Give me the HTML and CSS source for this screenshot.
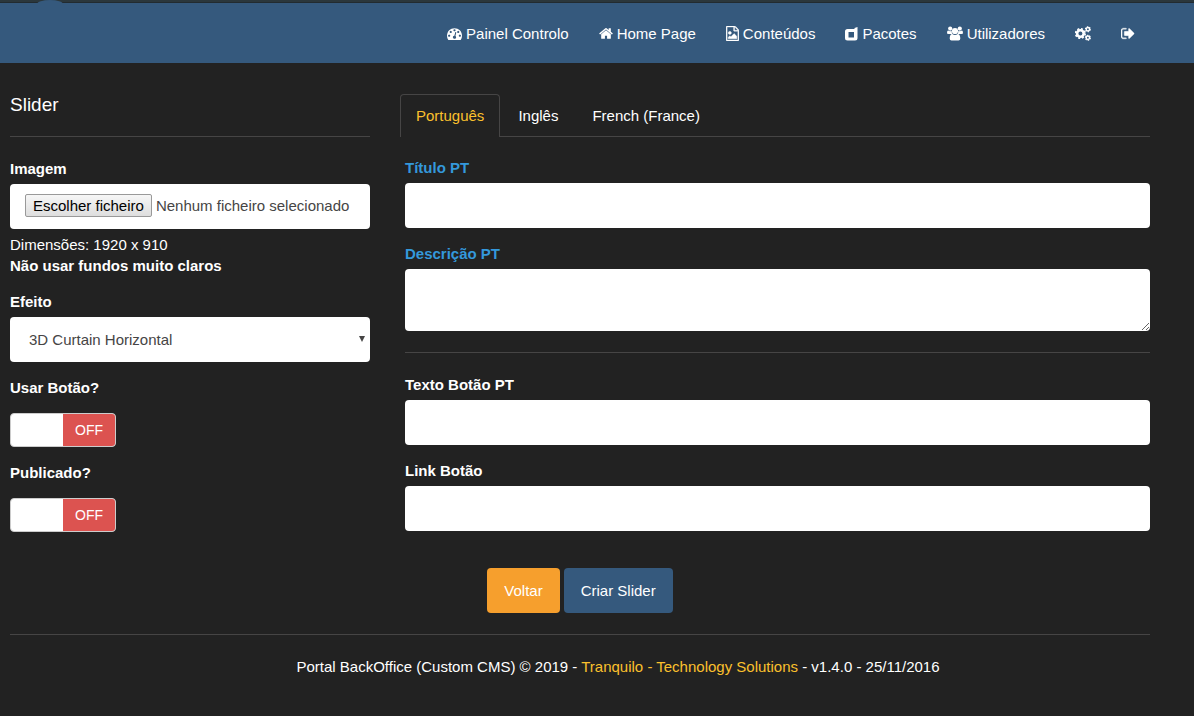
FILE: index.html
```html
<!DOCTYPE html>
<html lang="pt">
<head>
<meta charset="utf-8">
<title>Slider - BackOffice</title>
<link rel="stylesheet" href="styles.css">
</head>
<body>
<div class="topbar"></div>
<header class="navbar">
  <span class="navbar-bump"></span>
  <nav class="container">
    <ul class="menu">
      <li><a href="#"><svg width="15" height="15" viewBox="0 0 1792 1792" aria-hidden="true"><path d="M384 1152q0-53-37.5-90.5t-90.5-37.5-90.5 37.5-37.5 90.5 37.5 90.5 90.5 37.5 90.5-37.5 37.5-90.5zm192-448q0-53-37.5-90.5t-90.5-37.5-90.5 37.5-37.5 90.5 37.5 90.5 90.5 37.5 90.5-37.5 37.5-90.5zm428 481l101-382q6-26-7.5-48.5t-38.5-29.5-48 6.5-30 39.5l-101 382q-60 5-107 43.5t-63 98.5q-20 77 20 146t117 89 146-20 89-117q16-60-6-117t-72-91zm660-33q0-53-37.5-90.5t-90.5-37.5-90.5 37.5-37.5 90.5 37.5 90.5 90.5 37.5 90.5-37.5 37.5-90.5zm-640-640q0-53-37.5-90.5t-90.5-37.5-90.5 37.5-37.5 90.5 37.5 90.5 90.5 37.5 90.5-37.5 37.5-90.5zm448 192q0-53-37.5-90.5t-90.5-37.5-90.5 37.5-37.5 90.5 37.5 90.5 90.5 37.5 90.5-37.5 37.5-90.5zm320 448q0 261-141 483-19 29-54 29h-1402q-35 0-54-29-141-221-141-483 0-182 71-348t191-286 286-191 348-71 348 71 286 191 191 286 71 348z"/></svg>Painel Controlo</a></li>
      <li><a href="#"><svg width="14" height="15" viewBox="64 0 1664 1792" aria-hidden="true"><path d="M1472 992v480q0 26-19 45t-45 19h-384v-384h-256v384h-384q-26 0-45-19t-19-45v-480q0-1 .5-3t.5-3l575-474 575 474q1 2 1 6zm223-69l-62 74q-8 9-21 11h-3q-13 0-21-7l-692-577-692 577q-12 8-24 7-13-2-21-11l-62-74q-8-10-7-23.500t11-21.500l719-599q32-26 76-26t76 26l244 204v-195q0-14 9-23t23-9h192q14 0 23 9t9 23v408l219 182q10 8 11 21.500t-7 23.500z"/></svg>Home Page</a></li>
      <li><a href="#"><svg class="bold" width="13" height="15" viewBox="128 0 1536 1792" aria-hidden="true"><path d="M1596 380q28 28 48 76t20 88v1152q0 40-28 68t-68 28h-1344q-40 0-68-28t-28-68v-1600q0-40 28-68t68-28h896q40 0 88 20t76 48zm-444-244v376h376q-10-29-22-41l-313-313q-12-12-41-22zm384 1528v-1024h-416q-40 0-68-28t-28-68v-416h-768v1536h1280zm-128-448v320h-1024v-192l192-192 128 128 384-384zm-832-192q-80 0-136-56t-56-136 56-136 136-56 136 56 56 136-56 136-136 56z"/></svg>Conteúdos</a></li>
      <li><a href="#"><svg width="13" height="15" viewBox="0 0 13 15" aria-hidden="true"><path fill-rule="evenodd" d="M2.500 3H9.500V2L12.500 1V12Q12.500 14.500 10 14.500H2.500Q0 14.500 0 12V5.500Q0 3 2.500 3ZM3.500 6V11.500H9V6Z"/></svg>Pacotes</a></li>
      <li><a href="#"><svg width="16" height="15" viewBox="0 0 16 15" aria-hidden="true"><circle cx="3.200" cy="2.600" r="2.100"/><circle cx="12.800" cy="2.600" r="2.100"/><path d="M0 7.200Q0 4.300 1.200 4.600Q3 5.600 4.700 4.800Q4.400 6.800 5.600 8H1.600Q0 8 0 7.200ZM16 7.200Q16 4.300 14.800 4.600Q13 5.600 11.300 4.800Q11.600 6.800 10.400 8H14.400Q16 8 16 7.200Z"/><circle cx="8" cy="5" r="3.100"/><path d="M2.700 12.500Q2.700 8 5.300 7.900Q8 9.900 10.700 7.900Q13.300 8 13.300 12.500Q13.300 14.500 11.500 14.500H4.500Q2.700 14.500 2.700 12.500Z"/></svg>Utilizadores</a></li>
      <li><a href="#" aria-label="Definições"><svg width="16" height="15" viewBox="0 0 16 15" aria-hidden="true"><g fill="none" stroke="currentColor"><circle cx="5.400" cy="7.500" r="3.300" stroke-width="2.600"/><circle cx="5.400" cy="7.500" r="4.800" stroke-width="1.600" stroke-dasharray="2 1.770"/><circle cx="12.900" cy="3.200" r="1.700" stroke-width="1.500"/><circle cx="12.900" cy="3.200" r="2.500" stroke-width="1.100" stroke-dasharray="1.400 1.210"/><circle cx="12.900" cy="11.800" r="1.700" stroke-width="1.500"/><circle cx="12.900" cy="11.800" r="2.500" stroke-width="1.100" stroke-dasharray="1.400 1.210"/></g></svg></a></li>
      <li><a href="#" aria-label="Sair"><svg class="bold" width="14" height="15" viewBox="64 0 1664 1792" aria-hidden="true"><path d="M704 1440q0 4 1 20t.5 26.500-3 23.500-10 19.500-20.500 6.500h-320q-119 0-203.500-84.500t-84.500-203.500v-704q0-119 84.500-203.500t203.500-84.500h320q13 0 22.500 9.500t9.500 22.500q0 4 1 20t.5 26.500-3 23.500-10 19.500-20.500 6.500h-320q-66 0-113 47t-47 113v704q0 66 47 113t113 47h312l11.500 1 11.500 3 8 5.500 7 9 2 13.500zm928-544q0 26-19 45l-544 544q-19 19-45 19t-45-19-19-45v-288h-448q-26 0-45-19t-19-45v-384q0-26 19-45t45-19h448v-288q0-26 19-45t45-19 45 19l544 544q19 19 19 45z"/></svg></a></li>
    </ul>
  </nav>
</header>
<main class="container">
  <form>
    <div class="row">
      <section class="side">
        <h1 class="title">Slider</h1>
        <div class="group">
          <label class="label" for="imagem">Imagem</label>
          <label class="control file">
            <input class="hidden-input" type="file" id="imagem">
            <span class="file-button">Escolher ficheiro</span>
            <span>Nenhum ficheiro selecionado</span>
          </label>
          <p class="help">Dimensões: 1920 x 910<br><strong>Não usar fundos muito claros</strong></p>
        </div>
        <div class="group">
          <label class="label" for="efeito">Efeito</label>
          <div class="select-wrap">
            <select class="control select" id="efeito"><option>3D Curtain Horizontal</option></select>
            <svg class="arrow" width="6" height="6" viewBox="0 0 6 6" aria-hidden="true"><path d="M0 0H6L3 6Z"/></svg>
          </div>
        </div>
        <div class="group">
          <label class="label" for="botao">Usar Botão?</label>
          <label class="toggle"><input class="hidden-input" type="checkbox" id="botao"><span class="toggle-off">OFF</span></label>
        </div>
        <div class="group">
          <label class="label" for="publicado">Publicado?</label>
          <label class="toggle"><input class="hidden-input" type="checkbox" id="publicado"><span class="toggle-off">OFF</span></label>
        </div>
      </section>
      <section class="content">
        <div class="tabs" role="tablist">
          <button type="button" class="tab active" role="tab" aria-selected="true">Português</button>
          <button type="button" class="tab" role="tab">Inglês</button>
          <button type="button" class="tab" role="tab">French (France)</button>
        </div>
        <div class="panel">
          <div class="group">
            <label class="label lang" for="titulo">Título PT</label>
            <input class="control" type="text" id="titulo">
          </div>
          <div class="group">
            <label class="label lang" for="descricao">Descrição PT</label>
            <textarea class="control area" id="descricao"></textarea>
          </div>
          <hr class="rule">
          <div class="group">
            <label class="label" for="texto">Texto Botão PT</label>
            <input class="control" type="text" id="texto">
          </div>
          <div class="group">
            <label class="label" for="link">Link Botão</label>
            <input class="control" type="text" id="link">
          </div>
        </div>
      </section>
    </div>
    <div class="actions">
      <button type="button" class="btn warning">Voltar</button>
      <button type="submit" class="btn primary">Criar Slider</button>
    </div>
  </form>
  <hr class="rule">
  <footer class="footer">Portal BackOffice (Custom CMS) © 2019 - <a href="#">Tranquilo - Technology Solutions</a> - v1.4.0 - 25/11/2016</footer>
</main>
</body>
</html>
```
FILE: styles.css
```css
* {
  box-sizing: border-box;
}

body {
  margin: 0;
  background: #222;
  color: #fff;
  font: 15px/21px "Liberation Sans", Arial, sans-serif;
}

button, input, select, textarea {
  font: inherit;
}

.container {
  padding: 0 44px 0 10px;
}

.topbar {
  height: 3px;
  background: #2b373c;
  border-bottom: 1px solid #222b30;
}

.navbar {
  position: relative;
  background: #35597d;
}

.navbar-bump {
  position: absolute;
  top: -3px;
  left: 37px;
  width: 26px;
  height: 4px;
  border-radius: 50% 50% 0 0 / 100% 100% 0 0;
  background: #35597d;
}

.menu {
  display: flex;
  justify-content: flex-end;
  margin: 0;
  padding: 0;
  list-style: none;
}

.menu a {
  display: flex;
  align-items: center;
  gap: 4px;
  height: 60px;
  padding: 0 15px;
  color: #fff;
  text-decoration: none;
}

.menu svg {
  fill: currentColor;
}

.menu .bold {
  stroke: currentColor;
  stroke-width: 40px;
}

.row {
  display: flex;
  margin: 0 -15px;
  padding-top: 31px;
}

.side {
  flex: 0 0 33.333%;
  padding: 0 15px;
}

.content {
  flex: 1;
  padding: 0 15px;
}

.title {
  height: 43px;
  margin: 0 0 21px;
  border-bottom: 1px solid #464545;
  font-size: 19px;
  font-weight: 400;
  line-height: 21px;
}

.group {
  margin-bottom: 15px;
}

.label {
  display: block;
  margin-bottom: 5px;
  font-weight: 700;
}

.lang {
  color: #3498db;
}

.control {
  display: block;
  width: 100%;
  height: 45px;
  padding: 10px 15px;
  border: 0;
  border-radius: 4px;
  background: #fff;
  color: #464545;
}

.area {
  height: 62px;
  resize: vertical;
}

.file {
  position: relative;
  display: flex;
  align-items: flex-start;
  gap: 4px;
  line-height: 23px;
  white-space: nowrap;
}

.hidden-input {
  position: absolute;
  width: 1px;
  height: 1px;
  margin: 0;
  opacity: 0;
}

.file-button {
  padding: 0 7px;
  border: 1px solid #999;
  border-radius: 2px;
  background: linear-gradient(#f6f6f6, #dedede);
  color: #000;
  line-height: 21px;
}

.help {
  margin: 5px 0 0;
}

.select-wrap {
  position: relative;
}

.select {
  padding-left: 19px;
  appearance: none;
}

.arrow {
  position: absolute;
  top: 19px;
  right: 5px;
  fill: #464545;
  pointer-events: none;
}

.toggle {
  position: relative;
  display: flex;
  justify-content: flex-end;
  width: 106px;
  height: 34px;
  margin-top: 15px;
  border: 1px solid #ccc;
  border-radius: 4px;
  background: #fff;
  overflow: hidden;
}

.toggle-off {
  width: 50%;
  background: #dc5350;
  font-size: 14px;
  line-height: 32px;
  text-align: center;
}

.tabs {
  display: flex;
  gap: 2px;
  height: 43px;
  border-bottom: 1px solid #464545;
}

.tab {
  height: 43px;
  padding: 10px 15px 11px;
  border: 1px solid transparent;
  border-bottom: 0;
  border-radius: 4px 4px 0 0;
  background: none;
  color: #fff;
}

.tab.active {
  border-color: #464545;
  background: #222;
  color: #fbc02d;
}

.panel {
  padding: 20px 0 0 5px;
}

.rule {
  margin: 21px 0;
  border: 0;
  border-top: 1px solid #464545;
}

.actions {
  display: flex;
  justify-content: center;
  gap: 4px;
  margin-top: 21px;
}

.btn {
  height: 45px;
  padding: 0 17px;
  border: 0;
  border-radius: 4px;
  color: #fff;
}

.warning {
  background: #f69f2d;
}

.primary {
  background: #35597d;
}

.footer {
  padding-left: 76px;
  text-align: center;
}

.footer a {
  color: #fbc02d;
  text-decoration: none;
}
```
